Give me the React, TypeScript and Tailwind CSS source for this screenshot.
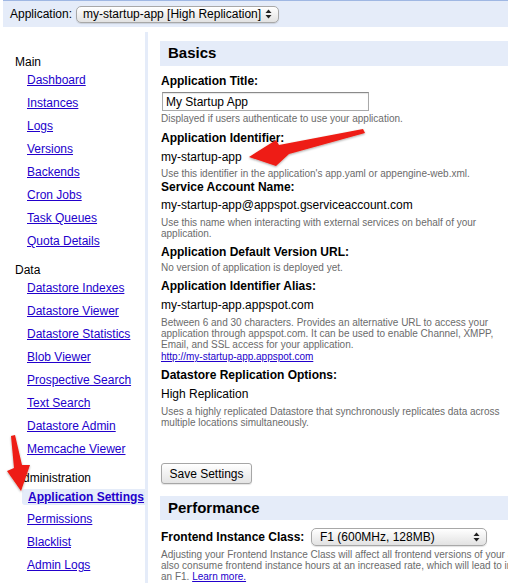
import React from 'react';

const sections = [
  {
    title: 'Main',
    links: ['Dashboard', 'Instances', 'Logs', 'Versions', 'Backends', 'Cron Jobs', 'Task Queues', 'Quota Details'],
  },
  {
    title: 'Data',
    links: [
      'Datastore Indexes',
      'Datastore Viewer',
      'Datastore Statistics',
      'Blob Viewer',
      'Prospective Search',
      'Text Search',
      'Datastore Admin',
      'Memcache Viewer',
    ],
  },
  {
    title: 'Administration',
    links: ['Application Settings', 'Permissions', 'Blacklist', 'Admin Logs'],
  },
];

function Arrows() {
  return (
    <svg className="w-[7px] h-[10px]" viewBox="0 0 7 10">
      <path d="M3.5 0.5 L6.5 4 L0.5 4 Z" fill="#222" />
      <path d="M3.5 9.5 L6.5 6 L0.5 6 Z" fill="#222" />
    </svg>
  );
}

function MacSelect({ label, className }: { label: string; className: string }) {
  return (
    <div
      className={
        'flex items-center justify-between rounded-[5px] border border-[#a8a8a8] bg-linear-to-b from-white to-[#e2e2e2] shadow-[0_1px_1px_rgba(0,0,0,0.12)] text-[12px] ' +
        className
      }
    >
      <span>{label}</span>
      <Arrows />
    </div>
  );
}

function Label({ children, className = '' }: { children: React.ReactNode; className?: string }) {
  return <div className={'font-bold text-[12px] leading-[14px] ' + className}>{children}</div>;
}

function Value({ children, className = '' }: { children: React.ReactNode; className?: string }) {
  return <div className={'text-[12px] leading-[14px] ' + className}>{children}</div>;
}

function Hint({ children, className = '' }: { children: React.ReactNode; className?: string }) {
  return <div className={'w-[346px] text-[10px] leading-[11px] text-[#6b6b6b] ' + className}>{children}</div>;
}

export default function App() {
  return (
    <div className="relative w-[508px] h-[583px] overflow-hidden bg-white text-black text-[12px] font-['Liberation_Sans',Arial,sans-serif]">
      {/* app picker */}
      <div className="ml-[3px] h-[27px] border-t border-[#9fb7e3] bg-[#e5ecf9] flex items-center pl-[7px] gap-[4px]">
        <span>Application:</span>
        <MacSelect label="my-startup-app [High Replication]" className="w-[203px] h-[17px] pl-[6px] pr-[6px]" />
      </div>

      <div className="flex">
        {/* nav */}
        <div className="w-[148px] shrink-0 mt-[5px] h-[560px] border-r-[3px] border-[#e5ecf9] pt-[24px]">
          {sections.map((s, i) => (
            <div key={s.title} className={i > 0 ? 'mt-[11px]' : ''}>
              <div className="pl-[15px] leading-[13px]">{s.title}</div>
              {s.links.map((l) =>
                l === 'Application Settings' ? (
                  <div key={l} className="h-[23px] flex items-center">
                    <span className="ml-[22px] flex-1 h-[16px] leading-[16px] pl-[6px] bg-[#e5ecf9] rounded-l-[3px] font-bold text-[#2200cc] underline">
                      {l}
                    </span>
                  </div>
                ) : (
                  <div key={l} className="h-[23px] leading-[23px] pl-[27px]">
                    <a href="#" className="text-[#2200cc] underline">
                      {l}
                    </a>
                  </div>
                ),
              )}
            </div>
          ))}
        </div>

        {/* settings */}
        <div className="flex-1 ml-[12px] pt-[14px]">
          <div className="h-[25px] bg-[#e5ecf9] pl-[8px] flex items-center font-bold text-[15px]">Basics</div>

          <div className="pl-[1px]">
            <Label className="mt-[8px]">Application Title:</Label>
            <input
              readOnly
              value="My Startup App"
              className="mt-[4px] ml-[1px] block w-[207px] h-[19px] border border-[#a9a9a9] border-t-[#8a8a8a] px-[3px] text-[12px] shadow-[inset_0_1px_1px_rgba(0,0,0,0.1)] outline-none"
            />
            <Hint className="mt-[2px]">Displayed if users authenticate to use your application.</Hint>

            <Label className="mt-[7px]">Application Identifier:</Label>
            <Value className="mt-[5px]">my-startup-app</Value>
            <Hint className="mt-[4px]">Use this identifier in the application's app.yaml or appengine-web.xml.</Hint>

            <Label className="mt-[1px]">Service Account Name:</Label>
            <Value className="mt-[4px]">my-startup-app@appspot.gserviceaccount.com</Value>
            <Hint className="mt-[5px]">
              Use this name when interacting with external services on behalf of your application.
            </Hint>

            <Label className="mt-[6px]">Application Default Version URL:</Label>
            <Hint className="mt-[3px]">No version of application is deployed yet.</Hint>

            <Label className="mt-[6px]">Application Identifier Alias:</Label>
            <Value className="mt-[5px]">my-startup-app.appspot.com</Value>
            <Hint className="mt-[5px]">
              Between 6 and 30 characters. Provides an alternative URL to access your application through
              appspot.com. It can be used to enable Channel, XMPP, Email, and SSL access for your application.
            </Hint>
            <Hint className="mt-[1px]">
              <a href="#" className="text-[#2200cc] underline">
                http://my-startup-app.appspot.com
              </a>
            </Hint>

            <Label className="mt-[6px]">Datastore Replication Options:</Label>
            <Value className="mt-[5px]">High Replication</Value>
            <Hint className="mt-[5px]">
              Uses a highly replicated Datastore that synchronously replicates data across multiple locations
              simultaneously.
            </Hint>

            <button className="mt-[35px] block w-[91px] h-[21px] border border-[#a6a6a6] rounded-[3px] bg-linear-to-b from-white to-[#e4e4e4] shadow-[0_1px_1px_rgba(0,0,0,0.1)] text-[12px]">
              Save Settings
            </button>
          </div>

          <div className="mt-[12px] h-[24px] bg-[#e5ecf9] pl-[8px] flex items-center font-bold text-[15px]">
            Performance
          </div>

          <div className="pl-[1px]">
            <div className="mt-[8px] flex items-center">
              <div className="w-[150px] font-bold text-[12px]">Frontend Instance Class:</div>
              <MacSelect label="F1 (600MHz, 128MB)" className="w-[176px] h-[18px] pl-[8px] pr-[6px]" />
            </div>
            {/* runs past the right edge, as in the original page */}
            <div className="mt-[3px] text-[10px] leading-[11px] text-[#6b6b6b] whitespace-nowrap">
              <div>
                Adjusting your Frontend Instance Class will affect all frontend versions of your application. Larger
                instance classes will
              </div>
              <div>
                also consume frontend instance hours at an increased rate, which will lead to increased costs compared
                to
              </div>
              <div>
                an F1.{' '}
                <a href="#" className="text-[#2200cc] underline">
                  Learn more.
                </a>
              </div>
            </div>
          </div>
        </div>
      </div>

      {/* red callout arrows */}
      <svg className="absolute left-0 top-0 w-[508px] h-[583px] pointer-events-none" viewBox="0 0 508 583">
        <defs>
          <filter id="sh" x="-20%" y="-20%" width="140%" height="140%">
            <feDropShadow dx="0" dy="1" stdDeviation="1" floodColor="#000" floodOpacity="0.35" />
          </filter>
        </defs>
        <polygon
          points="249,157 276,140 279,145 363,129 365,133 289,154 276,166"
          fill="#ee1c12"
          filter="url(#sh)"
        />
        <polygon points="11,436 15,435 22,465 30,465 21,491 7,471 14,468" fill="#ee1c12" filter="url(#sh)" />
      </svg>
    </div>
  );
}
